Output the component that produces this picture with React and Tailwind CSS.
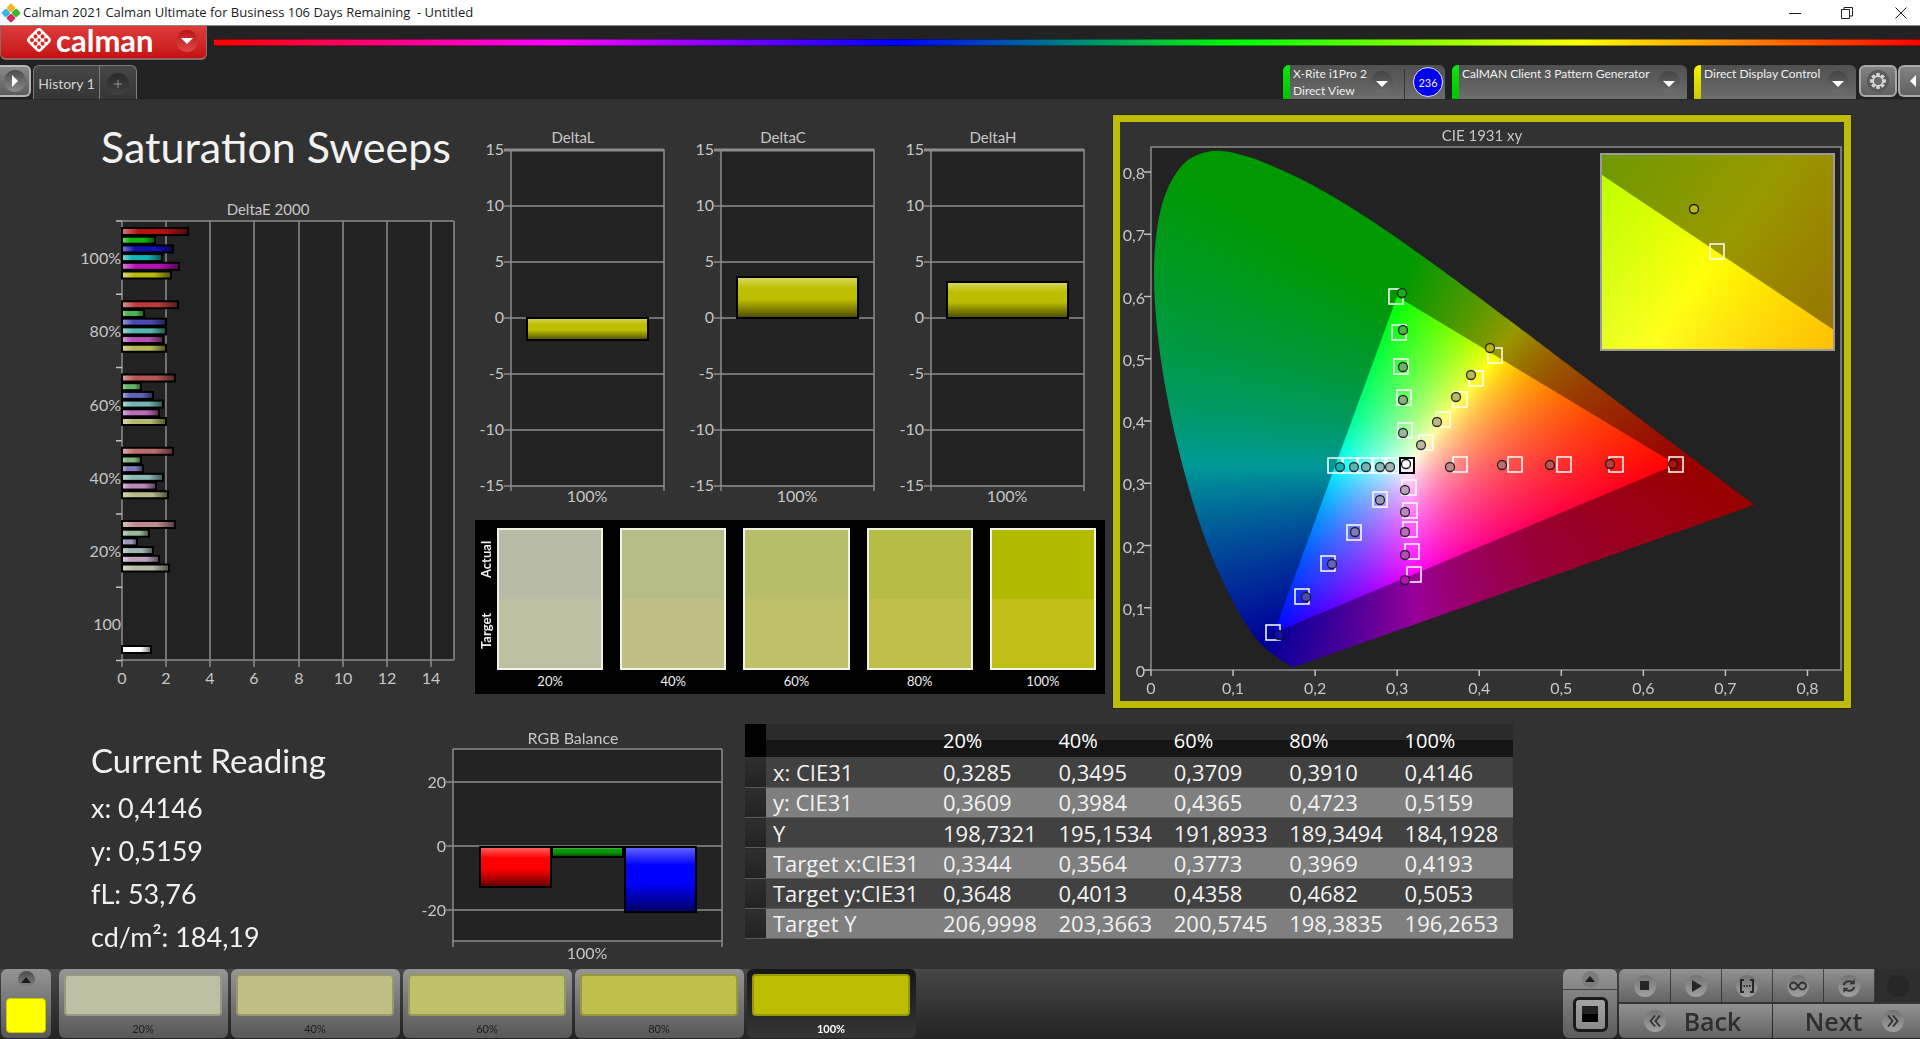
import React, { useLayoutEffect, useRef } from "react";

/* ---------- colour science for the chromaticity chart ---------- */

const LOCUS = [
  [0.1741, 0.005], [0.1738, 0.0049], [0.1733, 0.0048], [0.1726, 0.0048], [0.1714, 0.0051],
  [0.1689, 0.0069], [0.1644, 0.0109], [0.1566, 0.0177], [0.144, 0.0297], [0.1355, 0.0399],
  [0.1241, 0.0578], [0.1096, 0.0868], [0.0913, 0.1327], [0.0687, 0.2007], [0.0454, 0.295],
  [0.0235, 0.4127], [0.0082, 0.5384], [0.0039, 0.6548], [0.0139, 0.7502], [0.0389, 0.812],
  [0.0743, 0.8338], [0.1142, 0.8262], [0.1547, 0.8059], [0.1929, 0.7816], [0.2296, 0.7543],
  [0.2658, 0.7243], [0.3016, 0.6923], [0.3373, 0.6589], [0.3731, 0.6245], [0.4087, 0.5896],
  [0.4441, 0.5547], [0.4788, 0.5202], [0.5125, 0.4866], [0.5448, 0.4544], [0.5752, 0.4242],
  [0.6029, 0.3965], [0.627, 0.3725], [0.6482, 0.3514], [0.6658, 0.334], [0.6915, 0.3083],
  [0.7079, 0.292], [0.7347, 0.2653],
];
const GAMUT = [[0.64, 0.33], [0.3, 0.6], [0.15, 0.06]];

const PANEL = { w: 724, h: 579 };
const PLOT = { left: 31, right: 721, top: 25, bottom: 548, sx: 820.6, sy: 622.4 };
const INSET = { x: 481, y: 32, w: 233, h: 196, cx: 0.4193, cy: 0.5053, span: 0.05 };

const mainX = (x) => PLOT.left + x * PLOT.sx;
const mainY = (y) => PLOT.bottom - y * PLOT.sy;
const insetX = (x) => INSET.x + INSET.w / 2 + ((x - INSET.cx) / INSET.span) * INSET.w;
const insetY = (y) => INSET.y + INSET.h / 2 - ((y - INSET.cy) / INSET.span) * INSET.h;

function chromaticityToRgb(x, y) {
  const yy = Math.max(y, 0.0001);
  const X = x / yy;
  const Z = (1 - x - yy) / yy;
  const lin = [
    3.2406 * X - 1.5372 - 0.4986 * Z,
    -0.9689 * X + 1.8758 + 0.0415 * Z,
    0.0557 * X - 0.204 + 1.057 * Z,
  ].map((v) => Math.max(v, 0));
  const max = Math.max(...lin, 0.000001);
  return lin.map((v) => 255 * Math.pow(v / max, 1 / 1.15));
}

function makeLayer(w, h, toX, toY, gain) {
  const c = document.createElement("canvas");
  c.width = w;
  c.height = h;
  const ctx = c.getContext("2d");
  const img = ctx.createImageData(w, h);
  for (let j = 0; j < h; j++) {
    for (let i = 0; i < w; i++) {
      const rgb = chromaticityToRgb(toX(i), toY(j));
      const k = (j * w + i) * 4;
      img.data[k] = rgb[0] * gain;
      img.data[k + 1] = rgb[1] * gain;
      img.data[k + 2] = rgb[2] * gain;
      img.data[k + 3] = 255;
    }
  }
  ctx.putImageData(img, 0, 0);
  return c;
}

function drawClipped(ctx, layer, dx, dy, points) {
  ctx.save();
  ctx.beginPath();
  points.forEach(([x, y], i) => (i ? ctx.lineTo(x, y) : ctx.moveTo(x, y)));
  ctx.closePath();
  ctx.clip();
  ctx.drawImage(layer, dx, dy);
  ctx.restore();
}

function smooth(points) {
  const out = [];
  for (let i = 0; i < points.length - 1; i++) {
    const p0 = points[Math.max(i - 1, 0)];
    const p1 = points[i];
    const p2 = points[i + 1];
    const p3 = points[Math.min(i + 2, points.length - 1)];
    for (let s = 0; s < 8; s++) {
      const t = s / 8;
      out.push([0, 1].map((a) =>
        0.5 * (2 * p1[a] + (p2[a] - p0[a]) * t + (2 * p0[a] - 5 * p1[a] + 4 * p2[a] - p3[a]) * t * t +
          (3 * p1[a] - p0[a] - 3 * p2[a] + p3[a]) * t * t * t)));
    }
  }
  out.push(points[points.length - 1]);
  return out;
}

function ChromaticityField() {
  const ref = useRef(null);
  useLayoutEffect(() => {
    const ctx = ref.current.getContext("2d");
    ctx.clearRect(0, 0, PANEL.w, PANEL.h);
    const { w, h } = PANEL;
    const toX = (i) => (i - PLOT.left) / PLOT.sx;
    const toY = (j) => (PLOT.bottom - j) / PLOT.sy;
    const locus = smooth(LOCUS).map(([x, y]) => [mainX(x), mainY(y)]);
    drawClipped(ctx, makeLayer(w, h, toX, toY, 0.6), 0, 0, locus);
    drawClipped(ctx, makeLayer(w, h, toX, toY, 1), 0, 0, GAMUT.map(([x, y]) => [mainX(x), mainY(y)]));

    const ix = (i) => INSET.cx + ((i - INSET.w / 2) / INSET.w) * INSET.span;
    const iy = (j) => INSET.cy - ((j - INSET.h / 2) / INSET.h) * INSET.span;
    ctx.drawImage(makeLayer(INSET.w, INSET.h, ix, iy, 0.6), INSET.x, INSET.y);
    drawClipped(ctx, makeLayer(INSET.w, INSET.h, ix, iy, 1), INSET.x, INSET.y,
      GAMUT.map(([x, y]) => [insetX(x), insetY(y)]));
  }, []);
  return <canvas ref={ref} width={PANEL.w} height={PANEL.h} className="col-start-1 row-start-1 block h-auto w-full" />;
}

/* ---------- shared drawing pieces ---------- */

const LINE = "#8c8c8c";

function Shades() {
  return (
    <svg aria-hidden="true" width="0" height="0" className="absolute">
      <defs>
        <linearGradient id="shadeV" x1="0" y1="0" x2="0" y2="1">
          <stop offset="0" stopColor="#fff" stopOpacity="0.4" />
          <stop offset="0.28" stopColor="#fff" stopOpacity="0" />
          <stop offset="0.55" stopColor="#000" stopOpacity="0" />
          <stop offset="1" stopColor="#000" stopOpacity="0.62" />
        </linearGradient>
        <linearGradient id="shadeH" x1="0" y1="0" x2="1" y2="0">
          <stop offset="0" stopColor="#fff" stopOpacity="0.45" />
          <stop offset="0.25" stopColor="#fff" stopOpacity="0" />
          <stop offset="0.65" stopColor="#000" stopOpacity="0" />
          <stop offset="1" stopColor="#000" stopOpacity="0.55" />
        </linearGradient>
      </defs>
    </svg>
  );
}

function Bar({ x, y, w, h, color, shade }) {
  return (
    <g>
      <rect x={x} y={y} width={w} height={h} fill={color} />
      <rect x={x} y={y} width={w} height={h} fill={`url(#${shade})`} stroke="#000" strokeWidth="2" />
    </g>
  );
}

/* ---------- charts ---------- */

const DELTA_E = [
  { label: "100%", bars: [[188, "#b60f10"], [155, "#11b511"], [173, "#0f0fb5"], [162, "#12b5b5"], [179, "#b512b5"], [171, "#b8b811"]] },
  { label: "80%", bars: [[178, "#bb3b3b"], [144, "#4db34d"], [166, "#4a4ab4"], [166, "#55b5b0"], [163, "#b84db8"], [166, "#b8b850"]] },
  { label: "60%", bars: [[175, "#b95454"], [141, "#67b567"], [153, "#6262b6"], [163, "#72b5b2"], [159, "#bb6cbb"], [166, "#b8b86e"]] },
  { label: "40%", bars: [[173, "#bb6c6c"], [141, "#80b580"], [143, "#7b7bb8"], [163, "#8cb8b6"], [156, "#bd88bd"], [168, "#b8b888"]] },
  { label: "20%", bars: [[175, "#bf8c8c"], [149, "#9ab89a"], [137, "#9999b8"], [153, "#a2b5b5"], [159, "#bda3bd"], [169, "#b8baa2"]] },
];

function DeltaEChart() {
  const xs = [122, 166, 210, 254, 299, 343, 387, 431];
  const step = 73.25;
  return (
    <svg viewBox="0 200 475 490" className="block h-auto w-full" fontSize="16" fill="#c6c6c6" role="img" aria-label="DeltaE 2000">
      <text x="268" y="215" textAnchor="middle" fontSize="15">DeltaE 2000</text>
      <rect x="122" y="221" width="332" height="439" fill="#222" />
      <g stroke={LINE} strokeWidth="1.5">
        {xs.map((x, i) => <path key={x} d={`M${x} 221V${i ? 667 : 660}`} />)}
        <path d="M454 221V660M122 221H454M122 660H454" />
        <path d="M122 660V667" />
        {[0, 1, 2, 3, 4, 5, 6].map((i) => <path key={i} d={`M116 ${221 + i * step}H122`} stroke="#c0c0c0" />)}
      </g>
      {DELTA_E.map((g, k) => g.bars.map(([end, color], i) => (
        <Bar key={`${k}-${i}`} x={122} y={228 + k * step + i * 8.7} w={end - 122} h={7} color={color} shade="shadeH" />
      )))}
      <Bar x={122} y={646} w={29} h={7} color="#fff" shade="shadeH" />
      {DELTA_E.map((g, k) => <text key={g.label} x="121" y={264 + k * step} textAnchor="end">{g.label}</text>)}
      <text x="121" y="630" textAnchor="end">100</text>
      {xs.map((x, i) => <text key={x} x={x} y="684" textAnchor="middle">{i * 2}</text>)}
    </svg>
  );
}

function DeltaChart({ title, from, to }) {
  return (
    <svg viewBox="0 125 210 385" className="block h-auto w-full" fontSize="16" fill="#c6c6c6" role="img" aria-label={title}>
      <text x="98" y="143" textAnchor="middle" fontSize="15">{title}</text>
      <rect x="36" y="150" width="153" height="335" fill="#222" />
      {[15, 10, 5, 0, -5, -10, -15].map((v, i) => (
        <g key={v}>
          <path d={`M29 ${150 + i * 56}H189`} stroke={LINE} strokeWidth={i ? 1.5 : 3} />
          <text x="29" y={155 + i * 56} textAnchor="end">{v}</text>
        </g>
      ))}
      <path d="M36 149V491M189 149V491" stroke={LINE} strokeWidth="1.5" />
      <Bar x={52} y={from} w={121} h={to - from} color="#bebe00" shade="shadeV" />
      <text x="112" y="502" textAnchor="middle">100%</text>
    </svg>
  );
}

function RgbBalance() {
  return (
    <svg viewBox="415 725 330 240" className="block h-auto w-full" fontSize="16" fill="#c6c6c6" role="img" aria-label="RGB Balance">
      <text x="573" y="744" textAnchor="middle">RGB Balance</text>
      <rect x="453" y="749" width="269" height="192" fill="#222" />
      {[[20, 782], [0, 846], [-20, 910]].map(([v, y]) => (
        <g key={v}>
          <path d={`M446 ${y}H722`} stroke={LINE} strokeWidth="1.5" />
          <text x="446" y={y + 6} textAnchor="end">{v}</text>
        </g>
      ))}
      <path d="M453 749V947M722 749V947M453 749H722M453 941H722" stroke={LINE} strokeWidth="1.5" fill="none" />
      <Bar x={480} y={847} w={71} h={40} color="#ff0000" shade="shadeV" />
      <Bar x={552} y={847} w={71} h={10} color="#0a960a" shade="shadeV" />
      <Bar x={625} y={847} w={71} h={65} color="#0000ff" shade="shadeV" />
      <text x="587" y="959" textAnchor="middle">100%</text>
    </svg>
  );
}

const TARGETS = [
  [276, 174], [279, 210], [281, 244], [284, 275], [285, 308],
  [375, 233], [356, 256], [340, 277], [323, 297], [306, 320],
  [215, 343], [230, 343], [245, 343], [260, 343], [272, 343],
  [340, 342], [395, 342], [444, 342], [496, 342], [556, 342],
  [289, 365], [290, 388], [290, 407], [292, 429], [294, 452],
  [260, 377], [234, 410], [208, 441], [182, 474], [153, 510],
];
const READINGS = [
  [282, 171, "#11b511"], [283, 208, "#4db34d"], [283, 245, "#67b567"], [283, 278, "#80b580"], [283, 311, "#9ab89a"],
  [370, 226, "#b8b811"], [351, 253, "#b8b850"], [336, 275, "#b8b86e"], [317, 300, "#b8b888"], [301, 323, "#b8baa2"],
  [220, 345, "#12b5b5"], [234, 345, "#55b5b0"], [246, 345, "#72b5b2"], [260, 345, "#8cb8b6"], [270, 345, "#a2b5b5"],
  [330, 345, "#bf8c8c"], [382, 343, "#bb6c6c"], [430, 343, "#b95454"], [490, 342, "#bb3b3b"], [553, 342, "#b60f10"],
  [285, 368, "#bda3bd"], [285, 390, "#bd88bd"], [285, 410, "#bb6cbb"], [285, 433, "#b84db8"], [285, 458, "#b512b5"],
  [260, 378, "#9999b8"], [235, 410, "#7b7bb8"], [212, 442, "#6262b6"], [186, 475, "#4a4ab4"], [159, 513, "#0f0fb5"],
];

function CieChart() {
  const tenths = [0, 1, 2, 3, 4, 5, 6, 7, 8];
  const name = (i) => (i ? `0,${i}` : "0");
  return (
    <section className="border-[7px] border-[#bebc06] outline outline-[#272709]">
      <div className="grid">
        <svg viewBox="0 0 724 579" className="col-start-1 row-start-1 block h-auto w-full" aria-hidden="true">
          <rect x="31" y="25" width="690" height="523" fill="#222" />
        </svg>
        <ChromaticityField />
        <svg viewBox="0 0 724 579" className="col-start-1 row-start-1 block h-auto w-full" fontSize="16" fill="#c6c6c6" role="img" aria-label="CIE 1931 xy">
          <text x="362" y="19" textAnchor="middle" fontSize="15">CIE 1931 xy</text>
          <rect x="31" y="25" width="690" height="523" fill="none" stroke={LINE} strokeWidth="1.5" />
          {tenths.map((i) => (
            <g key={i}>
              <path d={`M${mainX(i / 10)} 548v6M31 ${mainY(i / 10)}h-7`} stroke="#c0c0c0" strokeWidth="1.5" />
              <text x={mainX(i / 10)} y="572" textAnchor="middle">{name(i)}</text>
              <text x="25" y={mainY(i / 10) + 7} textAnchor="end">{name(i)}</text>
            </g>
          ))}
          <g fill="none" stroke="#fff" strokeWidth="1.5">
            {TARGETS.map(([x, y]) => <rect key={`${x}-${y}`} x={x - 7} y={y - 7} width="14" height="15" />)}
          </g>
          <rect x="280" y="336" width="14" height="15" fill="none" stroke="#000" strokeWidth="2" />
          <circle cx="286" cy="342" r="4.5" fill="#fff" stroke="#111" strokeWidth="1.3" />
          <g stroke="#111" strokeOpacity="0.85" strokeWidth="1.3">
            {READINGS.map(([x, y, c]) => <circle key={`${x}-${y}`} cx={x} cy={y} r="4.5" fill={c} />)}
          </g>
          <rect x="481" y="32" width="233" height="196" fill="none" stroke="#9a9a9a" strokeWidth="2" />
          <rect x="590" y="122" width="14" height="15" fill="none" stroke="#fff" strokeWidth="1.5" />
          <circle cx="574" cy="87" r="4.5" fill="#b8b811" stroke="#111" strokeWidth="1.3" />
        </svg>
      </div>
    </section>
  );
}

/* ---------- swatches and table ---------- */

const SWATCHES = [
  { label: "20%", actual: "#b8bba5", target: "#bfc0a3" },
  { label: "40%", actual: "#b7bc87", target: "#bfbf86" },
  { label: "60%", actual: "#b7bd6a", target: "#bfc06a" },
  { label: "80%", actual: "#b6bd47", target: "#bfc04b" },
  { label: "100%", actual: "#b2bb00", target: "#c1c018" },
];

function SwatchPanel() {
  return (
    <section className="flex bg-black py-2 pr-[9px] text-[13px] text-[#f0f0f0]">
      <div className="flex w-[22px] flex-col items-center pb-[24px] font-bold">
        <span className="flex flex-1 rotate-180 items-center justify-center pt-2 leading-[16px] [writing-mode:vertical-rl]">Actual</span>
        <span className="flex flex-1 rotate-180 items-center justify-center leading-[16px] [writing-mode:vertical-rl]">Target</span>
      </div>
      <div className="grid flex-1 grid-cols-5 gap-[17px]">
        {SWATCHES.map((s) => (
          <figure key={s.label} className="text-center">
            <div className="h-[142px] border-2 border-[#f2f2e4]">
              <div className="h-1/2" style={{ backgroundColor: s.actual }} />
              <div className="h-1/2" style={{ backgroundColor: s.target }} />
            </div>
            <figcaption className="h-4 pt-[3px] leading-[16px]">{s.label}</figcaption>
          </figure>
        ))}
      </div>
    </section>
  );
}

const HEADINGS = ["20%", "40%", "60%", "80%", "100%"];
const ROWS = [
  ["x: CIE31", "0,3285", "0,3495", "0,3709", "0,3910", "0,4146"],
  ["y: CIE31", "0,3609", "0,3984", "0,4365", "0,4723", "0,5159"],
  ["Y", "198,7321", "195,1534", "191,8933", "189,3494", "184,1928"],
  ["Target x:CIE31", "0,3344", "0,3564", "0,3773", "0,3969", "0,4193"],
  ["Target y:CIE31", "0,3648", "0,4013", "0,4358", "0,4682", "0,5053"],
  ["Target Y", "206,9998", "203,3663", "200,5745", "198,3835", "196,2653"],
];

function DataTable() {
  return (
    <table className="h-[215px] w-full table-fixed border-collapse text-left font-['Open_Sans',sans-serif] text-[22px] leading-[28px] text-[#f2f2f2]">
      <colgroup>
        <col className="w-[21px]" />
        <col className="w-[170px]" />
        <col span="5" />
      </colgroup>
      <thead>
        <tr className="h-[33px] text-[20px] text-white">
          <td className="bg-black" />
          <td className="bg-linear-to-b from-[#2b2b2b] from-50% to-[#151515] to-50%" />
          {HEADINGS.map((h) => (
            <th key={h} scope="col" className="bg-linear-to-b from-[#2b2b2b] from-50% to-[#151515] to-50% px-[7px] py-0 font-medium">{h}</th>
          ))}
        </tr>
      </thead>
      <tbody>
        {ROWS.map(([label, ...values]) => (
          <tr key={label} className="h-[30px] border-b border-[#5a5a5a] odd:bg-[#414141] even:bg-[#7f7f7f]">
            <td className="bg-linear-to-b from-[#2f2f2f] to-[#222]" />
            <th scope="row" className="px-[7px] py-0 font-normal whitespace-nowrap">{label}</th>
            {values.map((v) => <td key={v} className="px-[7px] py-0 whitespace-nowrap">{v}</td>)}
          </tr>
        ))}
      </tbody>
    </table>
  );
}

/* ---------- chrome ---------- */

function TitleBar() {
  return (
    <header className="flex h-[26px] items-center border-b border-[#8a8a8a] bg-white font-['Open_Sans',sans-serif] text-[13px] text-[#1c1c1c]">
      <svg viewBox="0 0 20 20" className="ml-px h-5 w-5" aria-hidden="true">
        <g transform="rotate(45 10 10)">
          <rect x="3" y="3" width="6.8" height="6.8" rx="1.4" fill="#f5b921" />
          <rect x="10.2" y="3" width="6.8" height="6.8" rx="1.4" fill="#35b535" />
          <rect x="3" y="10.2" width="6.8" height="6.8" rx="1.4" fill="#3fb4e8" />
          <rect x="10.2" y="10.2" width="6.8" height="6.8" rx="1.4" fill="#d62b57" />
        </g>
      </svg>
      <h1 className="ml-[2px] flex-1 whitespace-pre">Calman 2021 Calman Ultimate for Business 106 Days Remaining  - Untitled</h1>
      <button type="button" aria-label="Minimize" className="flex h-full w-[36px] items-center justify-center">
        <svg viewBox="0 0 12 12" className="h-3 w-3"><path d="M0 6.5h12" stroke="#222" /></svg>
      </button>
      <button type="button" aria-label="Restore" className="flex h-full w-[68px] items-center justify-center">
        <svg viewBox="0 0 12 12" className="h-3 w-3" fill="none" stroke="#222"><path d="M.5 2.5h8v9h-8zM3 2.5V.5h8.5v8.500H8.500" /></svg>
      </button>
      <button type="button" aria-label="Close" className="flex h-full w-[39px] items-center justify-center">
        <svg viewBox="0 0 12 12" className="h-3 w-3" stroke="#222"><path d="M.5.5l11 11M11.500.5l-11 11" /></svg>
      </button>
    </header>
  );
}

function Brand() {
  return (
    <div className="flex h-[34px] items-start bg-[#222]">
      <button type="button" className="flex h-[34px] w-[207px] items-center rounded-b-md border-x border-b-2 border-[#8d6a6a] bg-linear-to-b from-[#dd3b3b] to-[#c60f12] pb-1 pl-[24px] text-white">
        <svg viewBox="0 0 28 28" className="h-[28px] w-[28px]" aria-hidden="true">
          <g transform="rotate(45 14 14)">
            <rect x="4.500" y="4.500" width="19" height="19" rx="4" fill="#fff" />
            {[9, 14, 19].map((x) => [9, 14, 19].map((y) => (
              <circle key={`${x}-${y}`} cx={x} cy={y} r={x === 14 && y === 14 ? 1.6 : 2} fill="#d42a2c" />
            )))}
          </g>
        </svg>
        <span className="ml-[3px] text-[31px] leading-[28px] font-bold">calman</span>
        <span className="mt-[2px] mr-[8px] ml-auto flex h-[22px] w-[22px] items-center justify-center rounded-full bg-linear-to-b from-[#b81216] to-[#e04444]">
          <svg viewBox="0 0 12 6" className="h-[6px] w-3"><path d="M0 0h12L6 6z" fill="#fff" /></svg>
        </span>
      </button>
      <div className="mt-[13px] ml-[7px] h-[7px] flex-1 border-y border-black/40 bg-linear-[90deg,#f00,#f0f,#00f,#0f0,#ff0,#f00]" />
    </div>
  );
}

function Down() {
  return (
    <span className="flex h-[22px] w-[22px] shrink-0 items-center justify-center rounded-full bg-linear-to-b from-[#444] to-[#6e6e6e]">
      <svg viewBox="0 0 12 6" className="mt-1 h-[6px] w-3"><path d="M0 0h12L6 6z" fill="#fff" /></svg>
    </span>
  );
}

const DEVICE = "flex h-[34px] overflow-hidden rounded-t-md bg-linear-to-b from-[#505050] to-[#6d6d6d] text-left text-[12px] leading-[17px] text-[#efefef]";
const GREEN = "w-[7px] shrink-0 bg-linear-to-b from-[#0ce60c] to-[#00c400]";

function gearPath() {
  const pts = [];
  for (let i = 0; i < 8; i++) {
    [[-0.27, 6], [-0.17, 8.6], [0.17, 8.6], [0.27, 6]].forEach(([a, r]) => {
      const t = (i * Math.PI) / 4 + a;
      pts.push(`${(10 + r * Math.sin(t)).toFixed(2)} ${(10 - r * Math.cos(t)).toFixed(2)}`);
    });
  }
  return `M${pts.join("L")}Z`;
}

function Tabs() {
  return (
    <nav className="flex h-[40px] items-start border-b border-[#2a2a2a] bg-[#222] pt-[5px]">
      <button type="button" aria-label="Expand" className="flex h-[32px] w-[31px] items-center justify-center rounded-r-md border-y-2 border-r-2 border-[#b5b5b5] bg-linear-to-b from-[#8a8a8a] to-[#5c5c5c]">
        <span className="flex h-[22px] w-[22px] items-center justify-center rounded-full bg-linear-to-b from-[#4c4c4c] to-[#8c8c8c]">
          <svg viewBox="0 0 6 12" className="h-3 w-[6px]"><path d="M0 0v12l6-6z" fill="#fff" /></svg>
        </span>
      </button>
      <div className="ml-[2px] flex h-[34px] rounded-t-md border border-b-0 border-[#7c7c7c] bg-linear-to-b from-[#474747] to-[#353535]">
        <button type="button" className="w-[66px] border-r border-[#7c7c7c] pt-[2px] text-[14px] text-[#d2d2d2]">History 1</button>
        <button type="button" aria-label="Add history" className="flex w-[36px] items-center justify-center pt-[3px]">
          <span className="flex h-[22px] w-[22px] items-center justify-center rounded-full bg-linear-to-b from-[#2a2a2a] to-[#424242]">
            <svg viewBox="0 0 8 8" className="h-2 w-2"><path d="M4 0v8M0 4h8" stroke="#909090" /></svg>
          </span>
        </button>
      </div>
      <div className="ml-auto flex gap-[7px]">
        <div className={DEVICE + " w-[162px]"}>
          <span className={GREEN} />
          <button type="button" className="flex flex-1 items-center justify-between pr-[11px] pl-[3px] text-left">
            <span>X-Rite i1Pro 2<br />Direct View</span>
            <Down />
          </button>
          <span className="mt-1 w-px bg-[#333]" />
          <span className="flex w-[40px] items-center justify-end pr-[2px]">
            <span className="flex h-[30px] w-[30px] items-center justify-center rounded-full border border-[#e4e4ff] bg-[#0000f0] text-[11px]">236</span>
          </span>
        </div>
        <button type="button" className={DEVICE + " w-[235px]"}>
          <span className={GREEN + " h-full"} />
          <span className="flex-1 pl-[3px]">CalMAN Client 3 Pattern Generator</span>
          <span className="self-center pr-[7px]"><Down /></span>
        </button>
        <button type="button" className={DEVICE + " w-[162px]"}>
          <span className="h-full w-[7px] shrink-0 bg-linear-to-b from-[#f4f400] to-[#c8c800]" />
          <span className="flex-1 pl-[3px]">Direct Display Control</span>
          <span className="self-center pr-[7px]"><Down /></span>
        </button>
      </div>
      <button type="button" aria-label="Settings" className="ml-[3px] flex h-[32px] w-[38px] items-center justify-center rounded-md border-2 border-[#a9a9a9] bg-linear-to-b from-[#828282] to-[#606060]">
        <span className="flex h-[22px] w-[22px] items-center justify-center rounded-full bg-[#5a5a5a]">
          <svg viewBox="0 0 20 20" className="h-[18px] w-[18px]">
            <path d={gearPath()} fill="#d4d4d4" stroke="#d4d4d4" strokeLinejoin="round" />
            <circle cx="10" cy="10" r="4.5" fill="#6a6a6a" />
          </svg>
        </span>
      </button>
      <button type="button" aria-label="Collapse" className="ml-px flex h-[32px] w-[22px] items-center justify-end rounded-l-md border-y-2 border-l-2 border-[#a9a9a9] bg-linear-to-b from-[#828282] to-[#606060] pr-1">
        <svg viewBox="0 0 6 12" className="h-3 w-[6px]"><path d="M6 0v12L0 6z" fill="#fff" /></svg>
      </button>
    </nav>
  );
}

const PATCHES = [["20%", "#bfc0a3"], ["40%", "#bfbf86"], ["60%", "#bfc06a"], ["80%", "#bfc04b"], ["100%", "#bebe00"]];
const KEY = "flex items-center justify-center bg-linear-to-b from-[#929292] to-[#646464]";
const WELL = "flex h-[22px] w-[22px] items-center justify-center rounded-full bg-linear-to-b from-[#727272] to-[#a2a2a2]";

function Footer() {
  return (
    <footer className="mt-auto flex h-[70px] bg-linear-to-b from-[#474747] to-[#232323] pb-px">
      <button type="button" aria-label="Current patch" className="ml-px flex w-[50px] flex-col items-center justify-between rounded-md bg-linear-to-b from-[#949494] to-[#575757] pt-[2px] pb-[5px]">
        <span className="flex h-[17px] w-[17px] items-center justify-center rounded-full bg-linear-to-b from-[#4a4a4a] to-[#888]">
          <svg viewBox="0 0 10 6" className="h-[6px] w-[10px]"><path d="M5 0l5 6H0z" fill="#1c1c1c" /></svg>
        </span>
        <span className="h-[35px] w-[40px] rounded border border-[#c8c800] bg-[#ff0]" />
      </button>
      <div className="ml-2 flex gap-[3px] text-[11px]">
        {PATCHES.map(([label, color], i) => (
          <button key={label} type="button" className={i === 4
            ? "flex w-[169px] flex-col items-center rounded-md bg-linear-to-b from-[#161616] to-[#363636] pt-[5px] pr-px font-bold text-white"
            : "flex w-[169px] flex-col items-center rounded-md bg-linear-to-b from-[#969696] to-[#585858] pt-[5px] pr-px text-[#1c1c1c]"}>
            <span className="h-[42px] w-[158px] rounded border-2 border-black/20" style={{ backgroundColor: color }} />
            <span className="mt-[6px] leading-[14px]">{label}</span>
          </button>
        ))}
      </div>
      <div className="ml-auto flex">
        <div className="mr-[2px] flex w-[54px] flex-col rounded-md bg-linear-to-b from-[#969696] to-[#5c5c5c]">
          <button type="button" aria-label="Raise panel" className="flex h-[21px] items-center justify-center border-b border-[#444]">
            <span className="flex h-[17px] w-[17px] items-center justify-center rounded-full bg-[#7c7c7c]">
              <svg viewBox="0 0 10 6" className="h-[6px] w-[10px]"><path d="M5 0l5 6H0z" fill="#1c1c1c" /></svg>
            </span>
          </button>
          <button type="button" aria-label="Stop reading" className="m-auto flex h-[35px] w-[35px] items-center justify-center rounded-md border-[3px] border-[#1a1a1a] bg-linear-to-b from-[#a4a4a4] to-[#8a8a8a]">
            <span className="h-[16px] w-[16px] bg-linear-to-b from-[#222] from-50% to-black to-50%" />
          </button>
        </div>
        <div className="flex w-[301px] flex-col gap-[2px]">
          <div className="flex h-[33px] gap-px">
            <button type="button" aria-label="Stop" className={KEY + " w-[51px] rounded-tl-md"}><span className={WELL}><span className="h-[9px] w-[9px] bg-[#262626]" /></span></button>
            <button type="button" aria-label="Play" className={KEY + " w-[50px]"}><span className={WELL}>
              <svg viewBox="0 0 10 12" className="ml-[2px] h-3 w-[10px]"><path d="M0 0v12l10-6z" fill="#262626" /></svg></span></button>
            <button type="button" aria-label="Read range" className={KEY + " w-[50px]"}><span className={WELL}>
              <svg viewBox="0 0 16 14" className="h-[14px] w-4" fill="none" stroke="#262626" strokeWidth="2"><path d="M5 1H2v12h3M11 1h3v12h-3" /><path d="M4.500 7h7" strokeDasharray="1.500 1.250" /></svg></span></button>
            <button type="button" aria-label="Loop" className={KEY + " w-[50px]"}><span className={WELL}>
              <svg viewBox="0 0 18 10" className="h-[10px] w-[18px]" fill="none" stroke="#333" strokeWidth="1.8"><path d="M9 5C7 2 6 1.500 4.500 1.500a3.500 3.500 0 0 0 0 7C6 8.500 7 8 9 5s3-3.500 4.500-3.500a3.500 3.500 0 0 1 0 7C12 8.500 11 8 9 5z" /></svg></span></button>
            <button type="button" aria-label="Refresh" className={KEY + " w-[50px]"}><span className={WELL}>
              <svg viewBox="0 0 16 16" className="h-[14px] w-[14px]" fill="none" stroke="#333" strokeWidth="2.4"><path d="M2 7a6 5 0 0 1 10-3M14 9a6 5 0 0 1-10 3" /><path d="M14.500 0v6h-6zM1.500 16v-6h6z" fill="#333" stroke="none" /></svg></span></button>
            <span className="flex flex-1 items-center justify-center bg-[#2e2e2e]"><span className="h-[22px] w-[22px] rounded-full bg-[#262626]" /></span>
          </div>
          <div className="flex flex-1 gap-px font-['Open_Sans',sans-serif] text-[25px] leading-[30px] font-semibold text-[#2e2e2e]">
            <button type="button" className={KEY + " w-[153px] gap-[18px] rounded-bl-md pr-[6px]"}>
              <span className={WELL}><svg viewBox="0 0 12 12" className="h-3 w-3" fill="none" stroke="#333" strokeWidth="1.800"><path d="M6 .5L1.500 6 6 11.500M11 .5L6.500 6 11 11.500" /></svg></span>
              Back
            </button>
            <button type="button" className={KEY + " flex-1 gap-[20px] pl-[16px]"}>
              Next
              <span className={WELL}><svg viewBox="0 0 12 12" className="h-3 w-3" fill="none" stroke="#333" strokeWidth="1.800"><path d="M1 .5L5.500 6 1 11.500M6 .5L10.500 6 6 11.500" /></svg></span>
            </button>
          </div>
        </div>
      </div>
    </footer>
  );
}

/* ---------- page ---------- */

export default function App() {
  return (
    <div className="flex min-h-screen flex-col bg-[#323232] font-[Lato,sans-serif]">
      <Shades />
      <TitleBar />
      <Brand />
      <Tabs />
      <main>
        <div className="grid grid-cols-[475fr_638fr_738fr_69fr]">
          <div>
            <h2 className="h-[100px] pt-[20px] pl-[101px] text-[43px] leading-[54px] whitespace-nowrap text-[#f2f2f2]">Saturation Sweeps</h2>
            <DeltaEChart />
          </div>
          <div className="flex flex-col gap-[10px] pt-[25px] pr-2">
            <div className="grid grid-cols-3">
              <DeltaChart title="DeltaL" from={318} to={340} />
              <DeltaChart title="DeltaC" from={277} to={318} />
              <DeltaChart title="DeltaH" from={282} to={318} />
            </div>
            <SwatchPanel />
          </div>
          <div className="pt-[15px]"><CieChart /></div>
        </div>
        <div className="grid grid-cols-[415fr_330fr_768fr_407fr]">
          <section className="pt-[30px] pl-[91px] text-[27px] leading-[43px] text-[#f0f0f0]">
            <h2 className="mb-[4px] text-[33px] leading-[44px]">Current Reading</h2>
            <p>x: 0,4146</p>
            <p>y: 0,5159</p>
            <p>fL: 53,76</p>
            <p>cd/m²: 184,19</p>
          </section>
          <div className="pt-[17px]"><RgbBalance /></div>
          <div className="pt-[16px]"><DataTable /></div>
        </div>
      </main>
      <Footer />
    </div>
  );
}
